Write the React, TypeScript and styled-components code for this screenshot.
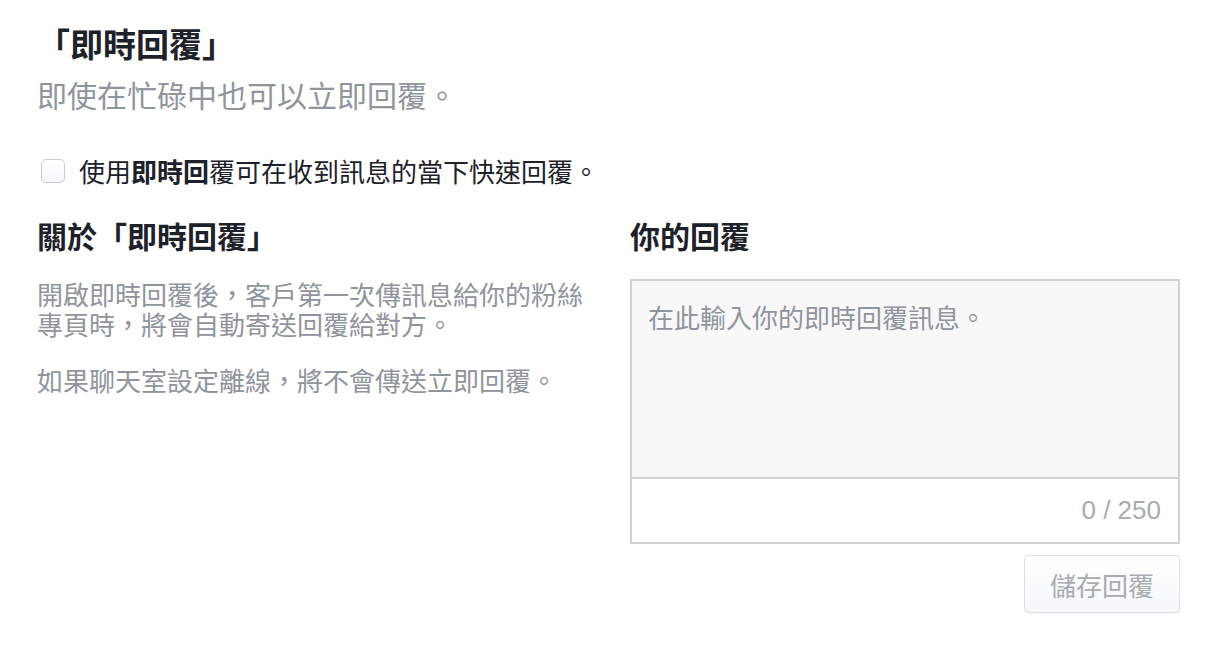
import React from "react";
import styled, { createGlobalStyle } from "styled-components";

const Global = createGlobalStyle`
  html, body { margin: 0; padding: 0; background: #ffffff; }
  body { font-family: "Noto Sans CJK TC", "Noto Sans", sans-serif; -webkit-font-smoothing: antialiased; }
  * { box-sizing: border-box; }
`;

const Page = styled.div`
  width: 1214px;
  padding: 22px 34px 0 37px;
`;

const Title = styled.h1`
  margin: 0;
  font-size: 33px;
  line-height: 42px;
  font-weight: 700;
  color: #1d2129;
`;

const Subtitle = styled.p`
  margin: 10px 0 0;
  font-size: 30px;
  line-height: 40px;
  font-weight: 400;
  color: #90949c;
`;

const CheckRow = styled.label`
  display: flex;
  align-items: center;
  gap: 14px;
  margin-top: 40px;
  padding-left: 4px;
  font-size: 26px;
  line-height: 34px;
  color: #1d2129;
`;

const Box = styled.span`
  width: 24px;
  height: 24px;
  border: 1px solid #c9ccd1;
  border-radius: 5px;
  background: linear-gradient(#ffffff, #f6f7f9);
  flex: none;
`;

const Strong = styled.b`
  font-weight: 700;
`;

const Columns = styled.div`
  display: grid;
  grid-template-columns: 560px 550px;
  column-gap: 33px;
  margin-top: 27px;
`;

const Column = styled.div`
  display: flex;
  flex-direction: column;
`;

const Heading = styled.h2`
  margin: 0;
  font-size: 30px;
  line-height: 40px;
  font-weight: 700;
  color: #1d2129;
`;

const Para = styled.p<{ $first?: boolean }>`
  margin: ${(p) => (p.$first ? "24px" : "26px")} 0 0;
  font-size: 26px;
  line-height: 30px;
  color: #90949c;
`;

const Editor = styled.div`
  margin-top: 24px;
  border: 2px solid #cfd1d4;
  display: flex;
  flex-direction: column;
`;

const TextArea = styled.div`
  height: 198px;
  background: #f8f8f8;
  padding: 20px 16px;
  font-size: 26px;
  line-height: 32px;
  color: #90949c;
  border-bottom: 2px solid #cfd1d4;
`;

const Footer = styled.div`
  height: 63px;
  display: flex;
  align-items: center;
  justify-content: flex-end;
  padding-right: 17px;
  font-family: "Liberation Sans", Arial, sans-serif;
  font-size: 26px;
  color: #a8abaf;
`;

const Actions = styled.div`
  display: flex;
  justify-content: flex-end;
  margin-top: 11px;
`;

const Button = styled.button`
  width: 156px;
  height: 58px;
  border: 1px solid #dddfe2;
  border-radius: 4px;
  background: linear-gradient(#ffffff, #f6f7f9);
  font-family: "Noto Sans CJK TC", sans-serif;
  font-size: 26px;
  color: #a8abb0;
  padding: 0;
`;

export default function App() {
  return (
    <>
      <Global />
      <Page>
        <Title>「即時回覆」</Title>
        <Subtitle>即使在忙碌中也可以立即回覆。</Subtitle>
        <CheckRow>
          <Box />
          <span>
            使用<Strong>即時回</Strong>覆可在收到訊息的當下快速回覆。
          </span>
        </CheckRow>
        <Columns>
          <Column>
            <Heading>關於「即時回覆」</Heading>
            <Para $first>
              開啟即時回覆後，客戶第一次傳訊息給你的粉絲專頁時，將會自動寄送回覆給對方。
            </Para>
            <Para>如果聊天室設定離線，將不會傳送立即回覆。</Para>
          </Column>
          <Column>
            <Heading>你的回覆</Heading>
            <Editor>
              <TextArea>在此輸入你的即時回覆訊息。</TextArea>
              <Footer>0 / 250</Footer>
            </Editor>
            <Actions>
              <Button>儲存回覆</Button>
            </Actions>
          </Column>
        </Columns>
      </Page>
    </>
  );
}
